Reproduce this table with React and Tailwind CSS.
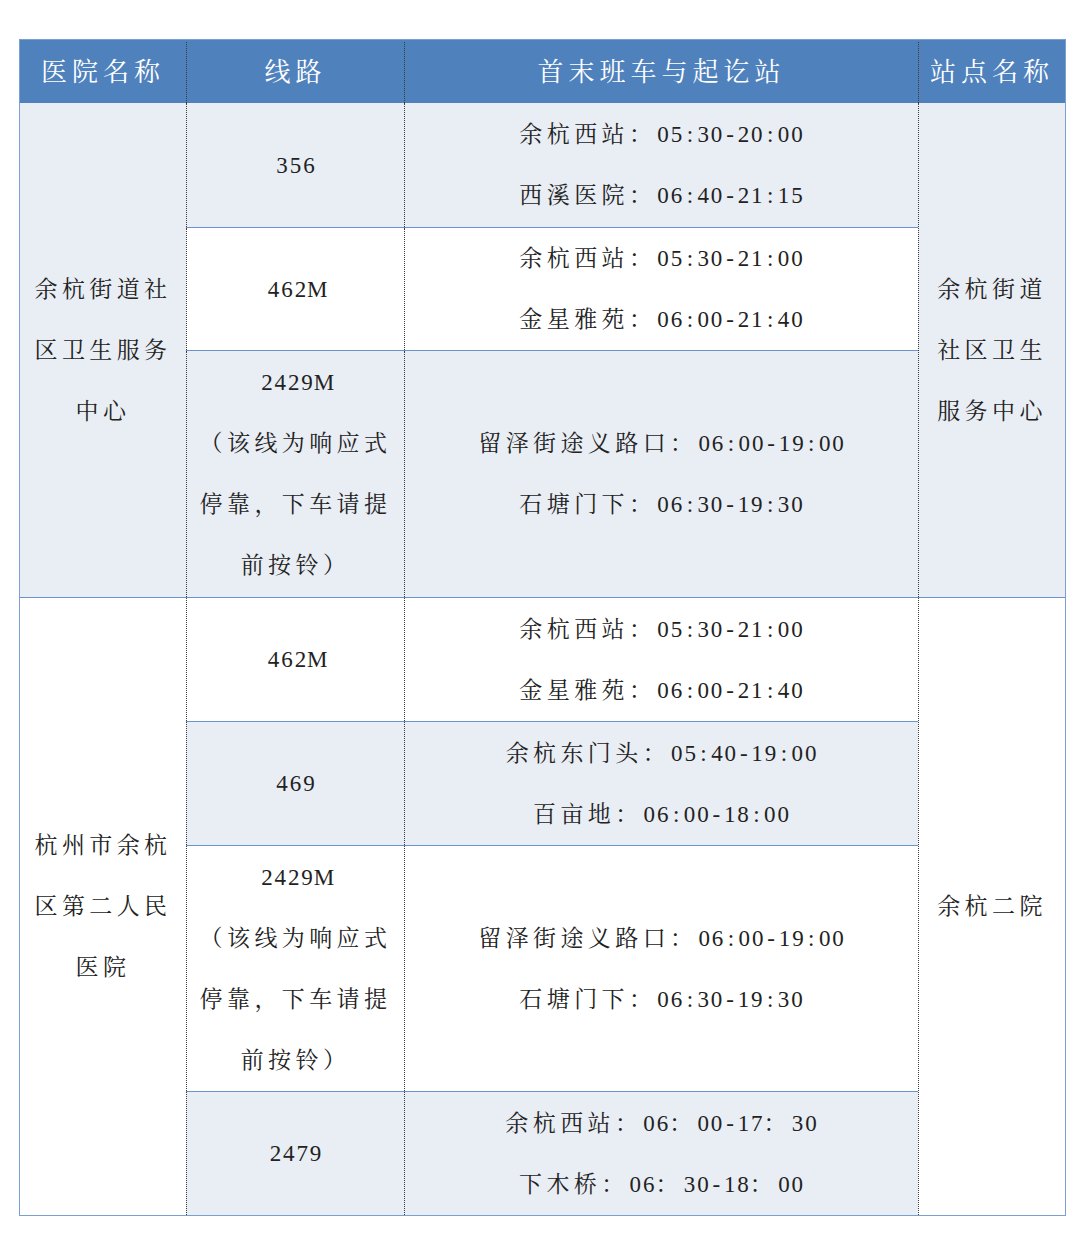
import React from "react";

const FONT = {
  fontFamily:
    '"Liberation Serif", "Noto Serif CJK SC", "Noto Sans CJK SC", serif',
};

const LIGHT = "bg-[#e9edf4]";
const WHITE = "bg-white";

const groups = [
  {
    name: ["余杭街道社", "区卫生服务", "中心"],
    station: ["余杭街道", "社区卫生", "服务中心"],
    bg: LIGHT,
    topBorder: false,
    rows: [
      {
        route: ["356"],
        sched: ["余杭西站：05:30-20:00", "西溪医院：06:40-21:15"],
        h: "h-[124px]",
        bg: LIGHT,
        bt: false,
      },
      {
        route: ["462M"],
        sched: ["余杭西站：05:30-21:00", "金星雅苑：06:00-21:40"],
        h: "h-[123px]",
        bg: WHITE,
        bt: true,
      },
      {
        route: ["2429M", "（该线为响应式", "停靠，下车请提", "前按铃）"],
        sched: ["留泽街途义路口：06:00-19:00", "石塘门下：06:30-19:30"],
        h: "h-[247px]",
        bg: LIGHT,
        bt: true,
      },
    ],
  },
  {
    name: ["杭州市余杭", "区第二人民", "医院"],
    station: ["余杭二院"],
    bg: WHITE,
    topBorder: true,
    rows: [
      {
        route: ["462M"],
        sched: ["余杭西站：05:30-21:00", "金星雅苑：06:00-21:40"],
        h: "h-[123px]",
        bg: WHITE,
        bt: false,
      },
      {
        route: ["469"],
        sched: ["余杭东门头：05:40-19:00", "百亩地：06:00-18:00"],
        h: "h-[124px]",
        bg: LIGHT,
        bt: true,
      },
      {
        route: ["2429M", "（该线为响应式", "停靠，下车请提", "前按铃）"],
        sched: ["留泽街途义路口：06:00-19:00", "石塘门下：06:30-19:30"],
        h: "h-[246px]",
        bg: WHITE,
        bt: true,
      },
      {
        route: ["2479"],
        sched: ["余杭西站：06：00-17：30", "下木桥：06：30-18：00"],
        h: "h-[124px]",
        bg: LIGHT,
        bt: true,
      },
    ],
  },
];

function Line({ text }) {
  const chars = Array.from(text);
  return (
    <div className="whitespace-nowrap">
      {chars.map((c, i) =>
        c === "M" ? (
          <span
            key={i}
            className="inline-block w-[17px] text-center tracking-normal text-[23px]"
          >
            {c}
          </span>
        ) : c.charCodeAt(0) < 128 ? (
          <span
            key={i}
            className="inline-block w-[13.4px] text-center tracking-normal text-[23px]"
          >
            {c}
          </span>
        ) : (
          <span key={i}>{c}</span>
        )
      )}
    </div>
  );
}

function Lines({ lines }) {
  return (
    <div className="text-center text-[23px] leading-[61px] tracking-[4.4px] text-[#222]">
      {lines.map((l, i) => (
        <Line key={i} text={l} />
      ))}
    </div>
  );
}

export default function App() {
  return (
    <div className="w-[1080px] h-[1254px] bg-white" style={FONT}>
      <div className="pt-[39px] pl-[19px]">
        <div className="w-[1047px] border border-[#7c9fd2]">
          {/* header */}
          <div className="flex h-[63px] bg-[#4f81bd] text-white text-[26px] tracking-[5px] pt-[2px]">
            <div className="w-[166px] flex items-center justify-center">
              医院名称
            </div>
            <div className="w-[218px] flex items-center justify-center border-l border-dotted border-[#3a3a3a]">
              线路
            </div>
            <div className="w-[514px] flex items-center justify-center border-l border-dotted border-[#3a3a3a]">
              首末班车与起讫站
            </div>
            <div className="flex-1 flex items-center justify-center border-l border-dotted border-[#3a3a3a]">
              站点名称
            </div>
          </div>

          {groups.map((g, gi) => (
            <div
              key={gi}
              className={`flex ${
                g.topBorder ? "border-t border-[#6a92cb]" : ""
              }`}
            >
              <div
                className={`w-[166px] flex items-center justify-center ${g.bg}`}
              >
                <Lines lines={g.name} />
              </div>
              <div className="w-[732px] flex flex-col">
                {g.rows.map((r, ri) => (
                  <div
                    key={ri}
                    className={`flex ${r.h} ${r.bg} ${
                      r.bt ? "border-t border-[#6a92cb]" : ""
                    }`}
                  >
                    <div className="w-[218px] flex items-center justify-center border-l border-dotted border-[#3a3a3a]">
                      <Lines lines={r.route} />
                    </div>
                    <div className="flex-1 flex items-center justify-center border-l border-dotted border-[#3a3a3a]">
                      <Lines lines={r.sched} />
                    </div>
                  </div>
                ))}
              </div>
              <div
                className={`flex-1 flex items-center justify-center border-l border-dotted border-[#3a3a3a] ${g.bg}`}
              >
                <Lines lines={g.station} />
              </div>
            </div>
          ))}
        </div>
      </div>
    </div>
  );
}
